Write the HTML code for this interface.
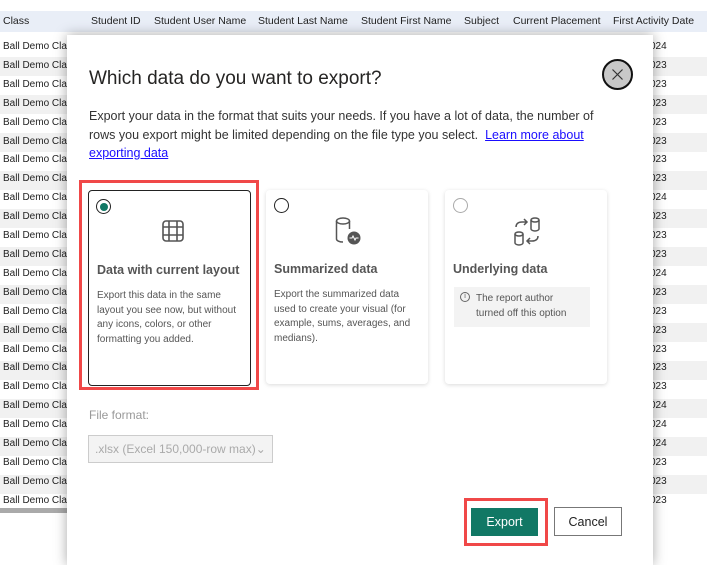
<!DOCTYPE html>
<html><head><style>
body{margin:0;width:707px;height:554px;overflow:hidden;background:#fff;font-family:"Liberation Sans",sans-serif;position:relative}
.hdr{position:absolute;left:0;top:11px;width:707px;height:21px;background:#e9eef7;font-size:10.5px;color:#222;line-height:21px;white-space:nowrap}
.hdr span{position:absolute}
.rows{position:absolute;left:0;top:38px;width:707px;height:473px;background:repeating-linear-gradient(#fff 0 19px,#f1f1f1 19px 38px)}
.col{position:absolute;top:0;font-size:10px;color:#222;line-height:18.9px;white-space:pre}
.sb{position:absolute;left:0;top:508px;width:70px;height:5px;background:#aaa}
.dlg{position:absolute;left:67px;top:35px;width:586px;height:530px;background:#fff;box-shadow:0 0 12px rgba(0,0,0,.35)}
.t{position:absolute;left:22px;top:33px;font-size:19px;color:#252423}
.close{position:absolute;left:535px;top:24px;width:27px;height:27px;border:2px solid #111;border-radius:50%;background:#c8c8c8}
.p{position:absolute;left:22px;top:72px;width:520px;font-size:12.5px;line-height:18.5px;color:#333}
.p a{color:#1a0dff;text-decoration:underline}
.card{position:absolute;top:155px;width:162px;height:194px;background:#fff;border-radius:4px;box-shadow:0 1px 4px rgba(0,0,0,.15)}
.card h{position:absolute;left:8px;top:72px;font-size:12.5px;font-weight:bold;color:#555}
.card p{position:absolute;left:8px;top:98px;margin:0;width:140px;font-size:10px;line-height:14.5px;color:#555}
.rad{position:absolute;left:8px;top:8px;width:13px;height:13px;border:1.3px solid #222;border-radius:50%}
.red{position:absolute;border:3px solid #f04848}
.lbl{position:absolute;left:22px;top:373px;font-size:12px;color:#999}
.sel{position:absolute;left:21px;top:400px;width:185px;height:28px;border:1px solid #ccc;background:#f3f3f3;font-size:12px;color:#aaa;line-height:27px;box-sizing:border-box;padding-left:6px}
.btn{position:absolute;top:472px;height:28px;font-size:12.5px;line-height:28px;text-align:center;box-sizing:border-box}
</style></head><body>
<div class="hdr"><span style="left:3px">Class</span><span style="left:91px">Student ID</span><span style="left:154px">Student User Name</span><span style="left:258px">Student Last Name</span><span style="left:361px">Student First Name</span><span style="left:464px">Subject</span><span style="left:513px">Current Placement</span><span style="left:613px">First Activity Date</span></div>
<div class="rows">
<div class="col" style="left:3px">Ball Demo Cla
Ball Demo Cla
Ball Demo Cla
Ball Demo Cla
Ball Demo Cla
Ball Demo Cla
Ball Demo Cla
Ball Demo Cla
Ball Demo Cla
Ball Demo Cla
Ball Demo Cla
Ball Demo Cla
Ball Demo Cla
Ball Demo Cla
Ball Demo Cla
Ball Demo Cla
Ball Demo Cla
Ball Demo Cla
Ball Demo Cla
Ball Demo Cla
Ball Demo Cla
Ball Demo Cla
Ball Demo Cla
Ball Demo Cla
Ball Demo Cla</div>
<div class="col" style="left:650px">024
023
023
023
023
023
023
023
024
023
023
023
024
023
023
023
023
023
023
024
024
024
023
023
023</div>
</div>
<div class="sb"></div>
<div class="dlg">
<div class="t">Which data do you want to export?</div>
<div class="close"><svg width="27" height="27" viewBox="0 0 27 27"><path d="M8.5 8.5L18.5 18.5M18.5 8.5L8.5 18.5" stroke="#333" stroke-width="1.2"/></svg></div>
<div class="p">Export your data in the format that suits your needs. If you have a lot of data, the number of rows you export might be limited depending on the file type you select.&nbsp; <a>Learn more about exporting data</a></div>
<div class="red" style="left:12px;top:145px;width:174px;height:204px"></div>
<div class="card" style="left:21px;top:155px;border:1px solid #222;width:161px;height:194px;box-shadow:none">
<div class="rad" style="left:7px;top:8px"><div style="position:absolute;left:2.5px;top:2.5px;width:8px;height:8px;border-radius:50%;background:#117865"></div></div>
<svg style="position:absolute;left:72px;top:28px" width="24" height="24" viewBox="0 0 24 24" fill="none" stroke="#555" stroke-width="1.6"><rect x="2" y="2" width="20" height="20" rx="3"/><path d="M8 2v20M16 2v20M2 8h20M2 16h20"/></svg>
<h>Data with current layout</h>
<p>Export this data in the same layout you see now, but without any icons, colors, or other formatting you added.</p>
</div>
<div class="card" style="left:199px">
<div class="rad"></div>
<svg style="position:absolute;left:68px;top:26px" width="30" height="30" viewBox="0 0 30 30" fill="none" stroke="#555" stroke-width="1.5"><ellipse cx="9" cy="5" rx="6.5" ry="3"/><path d="M2.5 5v18c0 1.7 3 3 6.5 3M15.5 5v8"/><circle cx="20" cy="22" r="6.5" fill="#555" stroke="none"/><path d="M15.5 22h2.5l1-2 2 4 1-2h2.5" stroke="#fff" stroke-width="1"/></svg>
<h>Summarized data</h>
<p>Export the summarized data used to create your visual (for example, sums, averages, and medians).</p>
</div>
<div class="card" style="left:378px">
<div class="rad" style="border-color:#aaa"></div>
<svg style="position:absolute;left:66px;top:25px" width="32" height="32" viewBox="0 0 32 32" fill="none" stroke="#555" stroke-width="1.5"><ellipse cx="24" cy="5" rx="4" ry="2"/><path d="M20 5v9c0 1 2 2 4 2s4-1 4-2V5"/><ellipse cx="8" cy="19" rx="4" ry="2"/><path d="M4 19v9c0 1 2 2 4 2s4-1 4-2v-9"/><path d="M5 12c0-3 2-5 6-5h5M13 4l3 3-3 3M27 21c0 3-2 5-6 5h-5M19 23l-3 3 3 3"/></svg>
<h>Underlying data</h>
<div style="position:absolute;left:9px;top:97px;width:136px;height:40px;background:#f3f3f3;font-size:10px;line-height:15px;color:#555;padding:4px 0 0 0;box-sizing:border-box"><span style="position:absolute;left:6px;top:5px;width:8px;height:8px;border:1px solid #666;border-radius:50%;font-size:7px;line-height:8px;text-align:center">i</span><div style="margin-left:22px;width:108px">The report author turned off this option</div></div>
</div>
<div class="lbl">File format:</div>
<div class="sel">.xlsx (Excel 150,000-row max)⌄</div>
<div class="red" style="left:397px;top:463px;width:78px;height:42px"></div>
<div class="btn" style="left:404px;width:67px;background:#117865;color:#fff;top:473px">Export</div>
<div class="btn" style="left:487px;width:68px;border:1px solid #777;color:#222;top:472px;height:29px">Cancel</div>
</div>
</body></html>
